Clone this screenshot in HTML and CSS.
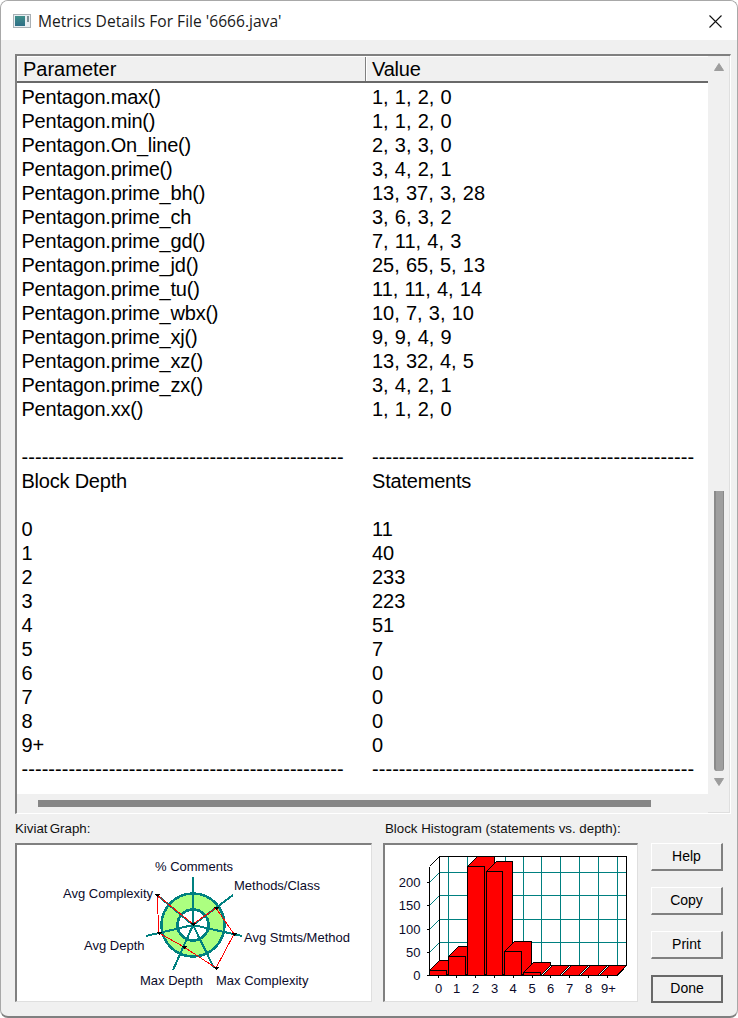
FILE: index.html
```html
<!DOCTYPE html>
<html lang="en">
<head>
<meta charset="utf-8">
<title>Metrics Details</title>
<link rel="stylesheet" href="styles.css">
</head>
<body>
<div class="window">
  <header class="titlebar">
    <svg class="app-icon" width="18" height="14" viewBox="0 0 18 14">
      <rect x="0.5" y="0.5" width="17" height="13" fill="#e8eef2" stroke="#a9b0b5"/>
      <defs><linearGradient id="ig" x1="0" y1="0" x2="0" y2="1"><stop offset="0" stop-color="#3f8f8a"/><stop offset="1" stop-color="#2c6d86"/></linearGradient></defs>
      <rect x="2" y="2" width="10" height="10" fill="url(#ig)"/>
      <rect x="14" y="2" width="2" height="6" fill="#7f9096"/>
    </svg>
    <span class="title">Metrics Details For File '6666.java'</span>
    <svg class="close" width="13" height="13" viewBox="0 0 13 13"><path d="M0.5 0.5L12.5 12.5M12.5 0.5L0.5 12.5" stroke="#111" stroke-width="1.1" fill="none"/></svg>
  </header>
  <main class="content">
    <section class="listbox">
      <div class="list-main">
        <div class="list-header">
          <div class="hcell hcell-first">Parameter</div>
          <div class="hcell">Value</div>
        </div>
        <div class="rows">
          <div class="row"><span>Pentagon.max()</span><span>1, 1, 2, 0</span></div>
          <div class="row"><span>Pentagon.min()</span><span>1, 1, 2, 0</span></div>
          <div class="row"><span>Pentagon.On_line()</span><span>2, 3, 3, 0</span></div>
          <div class="row"><span>Pentagon.prime()</span><span>3, 4, 2, 1</span></div>
          <div class="row"><span>Pentagon.prime_bh()</span><span>13, 37, 3, 28</span></div>
          <div class="row"><span>Pentagon.prime_ch</span><span>3, 6, 3, 2</span></div>
          <div class="row"><span>Pentagon.prime_gd()</span><span>7, 11, 4, 3</span></div>
          <div class="row"><span>Pentagon.prime_jd()</span><span>25, 65, 5, 13</span></div>
          <div class="row"><span>Pentagon.prime_tu()</span><span>11, 11, 4, 14</span></div>
          <div class="row"><span>Pentagon.prime_wbx()</span><span>10, 7, 3, 10</span></div>
          <div class="row"><span>Pentagon.prime_xj()</span><span>9, 9, 4, 9</span></div>
          <div class="row"><span>Pentagon.prime_xz()</span><span>13, 32, 4, 5</span></div>
          <div class="row"><span>Pentagon.prime_zx()</span><span>3, 4, 2, 1</span></div>
          <div class="row"><span>Pentagon.xx()</span><span>1, 1, 2, 0</span></div>
          <div class="row"></div>
          <div class="row row-rule"><span>------------------------------------------------</span><span>------------------------------------------------</span></div>
          <div class="row row-head"><span>Block Depth</span><span>Statements</span></div>
          <div class="row"></div>
          <div class="row"><span>0</span><span>11</span></div>
          <div class="row"><span>1</span><span>40</span></div>
          <div class="row"><span>2</span><span>233</span></div>
          <div class="row"><span>3</span><span>223</span></div>
          <div class="row"><span>4</span><span>51</span></div>
          <div class="row"><span>5</span><span>7</span></div>
          <div class="row"><span>6</span><span>0</span></div>
          <div class="row"><span>7</span><span>0</span></div>
          <div class="row"><span>8</span><span>0</span></div>
          <div class="row"><span>9+</span><span>0</span></div>
          <div class="row row-rule"><span>------------------------------------------------</span><span>------------------------------------------------</span></div>
        </div>
        <div class="hscroll"><div class="hthumb"></div></div>
      </div>
      <div class="vscroll">
        <svg class="arrow" width="10" height="8" viewBox="0 0 10 8"><path d="M5 0.5L9.5 7.5H0.5Z" fill="#9d9d9d" stroke="#9d9d9d" stroke-linejoin="round"/></svg>
        <div class="vthumb"></div>
        <svg class="arrow arrow-down" width="10" height="8" viewBox="0 0 10 8"><path d="M5 7.5L9.5 0.5H0.5Z" fill="#9d9d9d" stroke="#9d9d9d" stroke-linejoin="round"/></svg>
      </div>
    </section>

    <section class="bottom">
      <div class="panel panel-kiviat">
        <div class="panel-label panel-label-kiviat">Kiviat Graph:</div>
        <div class="graph">
          <svg class="chart" width="354" height="156" viewBox="17 845 354 156">
            <circle cx="193" cy="925" r="23.5" fill="none" stroke="#acff80" stroke-width="16"/>
            <g fill="none" stroke="#008080" stroke-width="2.6">
              <circle cx="193" cy="925" r="31.500"/>
              <circle cx="193" cy="925" r="15.500"/>
              <path stroke-width="2" d="M193 925L193 877M193 925L233 895M193 925L242 936M193 925L214 968M193 925L173 970M193 925L146 936M193 925L157 895"/>
            </g>
            <polygon points="193,924 216,908 234,934 216,968 184,947 159,933 157,895" fill="none" stroke="#ff0000" stroke-width="1"/>
            <g fill="#000">
              <path d="M191 923h5l-2.500 3z"/>
              <path d="M214 907h5l-2.500 3z"/>
              <path d="M232 933h5l-2.500 3z"/>
              <path d="M214 967h5l-2.500 3z"/>
              <path d="M182 946h5l-2.500 3z"/>
              <path d="M157 932h5l-2.500 3z"/>
              <path d="M155 894h5l-2.500 3z"/>
            </g>
            <g class="chart-text">
              <text x="155" y="871">% Comments</text>
              <text x="234" y="890">Methods/Class</text>
              <text x="244" y="942">Avg Stmts/Method</text>
              <text x="216" y="985">Max Complexity</text>
              <text x="140" y="985">Max Depth</text>
              <text x="84" y="950">Avg Depth</text>
              <text x="63" y="898">Avg Complexity</text>
            </g>
          </svg>
        </div>
      </div>
      <div class="panel panel-hist">
        <div class="panel-label panel-label-hist">Block Histogram (statements vs. depth):</div>
        <div class="graph">
          <svg class="chart" width="252" height="156" viewBox="385 845 252 156">
            <g fill="none" stroke="#008080" stroke-width="1">
              <path d="M448.500 857V965M467.500 857V965M486.500 857V965M505.500 857V965M523.500 857V965M541.500 857V965M560.500 857V965M579.500 857V965M598.500 857V965M617.500 857V965"/>
              <path d="M439.500 872.500H626.500M439.500 895.500H626.500M439.500 919.500H626.500M439.500 942.500H626.500"/>
              <path d="M429.500 882.500L439.500 872.500M429.500 905.500L439.500 895.500M429.500 929.500L439.500 919.500M429.500 952.500L439.500 942.500"/>
            </g>
            <g fill="none" stroke="#000" stroke-width="1">
              <path d="M429.500 866.500V975.500H617.500L626.500 965.500V856.500H439.500L429.500 866.500M439.500 856.500V965.500M439.500 965.500H626.500M439.500 965.500L429.500 975.500"/>
              <path d="M438.500 975V978M456.500 975V978M475.500 975V978M494.500 975V978M513.500 975V978M532.500 975V978M550.500 975V978M569.500 975V978M588.500 975V978M607.500 975V978"/>
              <path d="M426.500 882.500H429M426.500 905.500H429M426.500 929.500H429M426.500 952.500H429M426.500 975.500H429"/>
            </g>
            <g fill="#ff0000" stroke="#000" stroke-width="1.3" stroke-linejoin="miter">
              <path d="M429.500 970.500L439.500 960.500H456.500V965.500L446.500 975.500Z"/>
              <rect x="429.500" y="970.500" width="17" height="5"/>
              <path d="M448.500 956.500L458.500 946.500H475.500V965.500L465.500 975.500Z"/>
              <rect x="448.500" y="956.500" width="17" height="19"/>
              <path d="M467.500 866.500L477.500 856.500H494.500V965.500L484.500 975.500Z"/>
              <rect x="467.500" y="866.500" width="17" height="109"/>
              <path d="M486.500 871.500L496.500 861.500H512.500V965.500L502.500 975.500Z"/>
              <rect x="486.500" y="871.500" width="16" height="104"/>
              <path d="M504.500 951.500L514.500 941.500H531.500V965.500L521.500 975.500Z"/>
              <rect x="504.500" y="951.500" width="17" height="24"/>
              <path d="M523.500 972.500L533.500 962.500H550.500V965.500L540.500 975.500Z"/>
              <rect x="523.500" y="972.500" width="17" height="3"/>
              <path d="M542.500 975.500L552.500 965.500H569.500L559.500 975.500Z"/>
              <path d="M561.500 975.500L571.500 965.500H588.500L578.500 975.500Z"/>
              <path d="M580.500 975.500L590.500 965.500H607.500L597.500 975.500Z"/>
              <path d="M599.500 975.500L609.500 965.500H626.500L616.500 975.500Z"/>
            </g>
            <g class="chart-text chart-num chart-end">
              <text x="420.500" y="887">200</text>
              <text x="420.500" y="910">150</text>
              <text x="420.500" y="934">100</text>
              <text x="420.500" y="957">50</text>
              <text x="420.500" y="980">0</text>
            </g>
            <g class="chart-text chart-num chart-mid">
              <text x="438.500" y="993">0</text>
              <text x="456.500" y="993">1</text>
              <text x="475.500" y="993">2</text>
              <text x="494.500" y="993">3</text>
              <text x="513" y="993">4</text>
              <text x="532" y="993">5</text>
              <text x="550.500" y="993">6</text>
              <text x="569.500" y="993">7</text>
              <text x="588.500" y="993">8</text>
              <text x="608.500" y="993">9+</text>
            </g>
          </svg>
        </div>
      </div>
      <div class="buttons">
        <button class="btn" type="button">Help</button>
        <button class="btn" type="button">Copy</button>
        <button class="btn" type="button">Print</button>
        <button class="btn btn-default" type="button">Done</button>
      </div>
    </section>
  </main>
</div>
</body>
</html>
```

FILE: styles.css
```css
* { box-sizing: border-box; }
html, body { margin: 0; padding: 0; height: 100%; background: #ffffff; }
body { font-family: "Liberation Sans", Arial, sans-serif; color: #000; overflow: hidden; }

.window {
  width: 738px;
  height: 1018px;
  display: flex;
  flex-direction: column;
  background: #f0f0f0;
  border: 1px solid #a8a8a8;
  border-bottom: 2px solid #808080;
  border-radius: 8px;
  overflow: hidden;
}

.titlebar {
  flex: 0 0 39px;
  display: flex;
  align-items: center;
  background: #ffffff;
  padding: 0 15px 0 12px;
}
.app-icon { flex: none; margin-top: 1px; }
.title {
  margin-left: 7px;
  font-family: "Open Sans", "Noto Sans", sans-serif;
  font-size: 15.600px;
  color: #1a1a1a;
}
.close { margin-left: auto; margin-top: 1px; }

.content { flex: 1; display: flex; flex-direction: column; padding: 14px 7px 0 14px; }

.listbox {
  width: 716px;
  height: 760px;
  display: flex;
  border-top: 2px solid #808080;
  border-left: 2px solid #808080;
  border-right: 1px solid #ffffff;
  border-bottom: 1px solid #ffffff;
  box-shadow: inset -1px -1px 0 #dfdfdf;
}
.list-main { width: 691px; display: flex; flex-direction: column; }
.list-header {
  flex: 0 0 27px;
  display: grid;
  grid-template-columns: 349px 1fr;
  border-top: 1px solid #fff;
  border-bottom: 2px solid #696969;
}
.hcell {
  padding: 1px 0 0 5px;
  font-size: 20px;
  line-height: 23px;
  letter-spacing: -0.2px;
  background: #f0f0f0;
  border-left: 1px solid #fff;
}
.hcell-first { border-right: 1px solid #808080; letter-spacing: 0; }
.rows { flex: 1; background: #fff; padding: 2px 0 0 5px; overflow: hidden; }
.row { display: grid; grid-template-columns: 350px 1fr; height: 24px; font-size: 20px; line-height: 24px; white-space: nowrap; }
.row > span:first-child { letter-spacing: -0.22px; margin-left: -0.5px; }
.row > span:last-child { word-spacing: 0.6px; }
.row-head > span:last-child { letter-spacing: -0.2px; }
.row-rule > span:first-child, .row-rule > span:last-child { letter-spacing: 0.05px; }
.hscroll { flex: 0 0 19px; background: #f0f0f0; padding: 6px 0 0 21px; }
.hthumb { width: 613px; height: 7px; background: #868686; }

.vscroll { width: 21px; display: flex; flex-direction: column; padding: 7px 0 0 6px; }
.arrow { flex: none; display: block; }
.vthumb {
  flex: none;
  width: 10px;
  height: 280px;
  margin-top: 420px;
  background: #9f9f9f;
  border-left: 2px solid #8a8a8a;
  border-right: 1px solid #8a8a8a;
  border-radius: 0 0 3px 3px;
}
.arrow-down { margin-top: 7px; }

.bottom { display: flex; margin-top: 8px; }
.panel-kiviat { width: 368px; }
.panel-hist { width: 268px; }
.panel-label { font-size: 13.300px; line-height: 14px; height: 21px; color: #111; white-space: nowrap; }
.panel-label-kiviat { word-spacing: -1.5px; }
.panel-label-hist { padding-left: 2px; }
.graph {
  height: 159px;
  background: #fff;
  border-top: 2px solid #808080;
  border-left: 2px solid #808080;
  border-right: 1px solid #dfdfdf;
  border-bottom: 1px solid #dfdfdf;
  overflow: hidden;
}
.panel-kiviat .graph { width: 357px; }
.panel-hist .graph { width: 255px; }
.chart { display: block; shape-rendering: crispEdges; }
.chart-text text { font-family: "Liberation Sans", Arial, sans-serif; font-size: 13px; fill: #0a0a2a; }
.chart-text.chart-num text { font-size: 13px; }
.chart-end text { text-anchor: end; }
.chart-mid text { text-anchor: middle; }

.buttons { display: flex; flex-direction: column; gap: 16px; padding-top: 21px; }
.btn {
  width: 72px;
  height: 28px;
  padding: 0 0 2px;
  background: #f0f0f0;
  border-top: 1px solid #fff;
  border-left: 1px solid #fff;
  border-right: 2px solid #808080;
  border-bottom: 2px solid #808080;
  font-family: "Liberation Sans", Arial, sans-serif;
  font-size: 14px;
  color: #000;
}
.btn-default { border: 2px solid #696969; }
```
